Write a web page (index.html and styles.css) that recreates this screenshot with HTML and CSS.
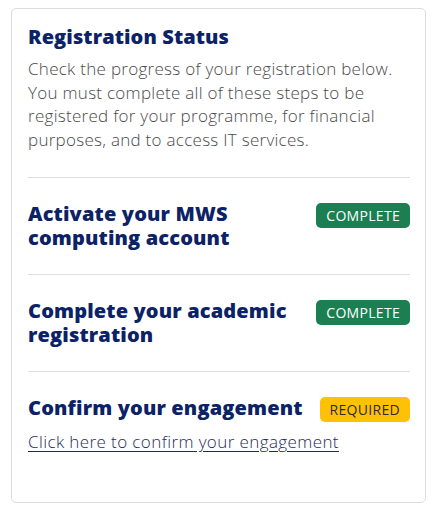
FILE: index.html
```html
<!DOCTYPE html>
<html lang="en">
<head>
<meta charset="utf-8">
<title>Registration Status</title>
<link rel="stylesheet" href="styles.css">
</head>
<body>
<div class="card">
  <h2 class="card-title">Registration Status</h2>
  <p class="intro">Check the progress of your registration below. You must complete all of these steps to be registered for your programme, for financial purposes, and to access IT services.</p>
  <div class="step">
    <div class="step-head">
      <h3 class="step-title">Activate your MWS computing account</h3>
      <span class="badge badge-complete">COMPLETE</span>
    </div>
  </div>
  <div class="step">
    <div class="step-head">
      <h3 class="step-title">Complete your academic registration</h3>
      <span class="badge badge-complete">COMPLETE</span>
    </div>
  </div>
  <div class="step">
    <div class="step-head">
      <h3 class="step-title">Confirm your engagement</h3>
      <span class="badge badge-required">REQUIRED</span>
    </div>
    <a class="step-link" href="#">Click here to confirm your engagement</a>
  </div>
</div>
</body>
</html>
```

FILE: styles.css
```css
html, body {
  margin: 0;
  padding: 0;
  background: #ffffff;
}

body {
  font-family: "Open Sans", "Liberation Sans", sans-serif;
  padding: 8px 12px 0 11px;
}

.card {
  box-sizing: border-box;
  width: 415px;
  height: 495px;
  border: 1px solid #dcdcdc;
  border-radius: 5px;
  padding: 16px 15px 16px 16px;
}

.card-title {
  margin: 0;
  font-size: 20px;
  line-height: 24px;
  font-weight: 800;
  letter-spacing: 0.1px;
  color: #0c2266;
}

.intro {
  margin: 8px 0 0;
  font-size: 17px;
  line-height: 23.7px;
  font-weight: 300;
  letter-spacing: 0.28px;
  color: #4a4a4a;
}

.step {
  margin-top: 25px;
  padding-top: 24px;
  border-top: 1px solid #dedede;
}

.step + .step {
  margin-top: 24px;
}

.step-head {
  display: flex;
  justify-content: space-between;
  align-items: flex-start;
  gap: 16px;
}

.step-title {
  margin: 0;
  font-size: 20px;
  line-height: 24px;
  font-weight: 800;
  letter-spacing: 0.15px;
  color: #0c2266;
}

.badge {
  flex: none;
  margin-top: 1px;
  height: 25px;
  box-sizing: border-box;
  padding: 0 10px;
  border-radius: 5px;
  font-size: 14px;
  line-height: 25px;
  font-weight: 400;
  letter-spacing: 0.3px;
}

.badge-complete {
  background: #1b7f52;
  color: #ffffff;
}

.badge-required {
  background: #ffc107;
  color: #2a2a2a;
}

.step-link {
  display: inline-block;
  margin-top: 8px;
  font-size: 17px;
  line-height: 24px;
  font-weight: 300;
  letter-spacing: 0.4px;
  color: #1d2b5c;
  text-decoration: underline;
  text-underline-offset: 3px;
}
```
